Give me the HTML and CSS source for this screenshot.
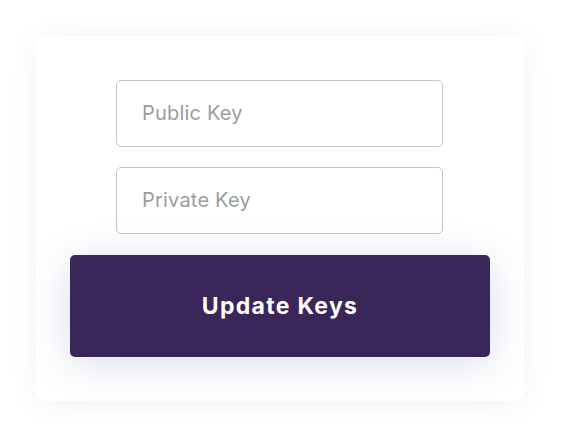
FILE: index.html
```html
<!DOCTYPE html>
<html>
<head>
<meta charset="utf-8">
<link rel="stylesheet" href="styles.css">
</head>
<body>
<div class="page">
  <form class="card">
    <input class="field" type="text" placeholder="Public Key">
    <input class="field" type="text" placeholder="Private Key">
    <button class="btn" type="button">Update Keys</button>
  </form>
</div>
</body>
</html>
```
FILE: styles.css
```css
* { box-sizing: border-box; }
html, body { margin: 0; background: #ffffff; }
.page { padding: 36px; width: 562px; height: 439px; }
.card {
  width: 488px;
  height: 365px;
  margin: 0;
  background: #ffffff;
  border-radius: 10px;
  box-shadow: 0 2px 30px rgba(0, 0, 0, 0.06);
  padding: 44px 34px;
  display: flex;
  flex-direction: column;
  align-items: center;
}
.field {
  width: 327px;
  height: 67px;
  margin-right: 1px;
  border: 1.5px solid #c6c6c8;
  border-radius: 5px;
  padding: 0 0 1px 25px;
  font-family: Inter, "Noto Sans", sans-serif;
  font-size: 20px;
  letter-spacing: 0.2px;
  color: #333;
  background: #fff;
  outline: none;
}
.field + .field { margin-top: 20px; }
.field::placeholder { color: #9a9d9d; }
.btn {
  margin-top: 21px;
  width: 420px;
  height: 102px;
  border: none;
  border-radius: 5px;
  background: #3a2659;
  color: #ffffff;
  font-family: Inter, "Noto Sans", sans-serif;
  font-weight: 700;
  font-size: 23px;
  letter-spacing: 1.3px;
  box-shadow: 0 6px 40px rgba(70, 90, 170, 0.2);
  cursor: pointer;
}
```
